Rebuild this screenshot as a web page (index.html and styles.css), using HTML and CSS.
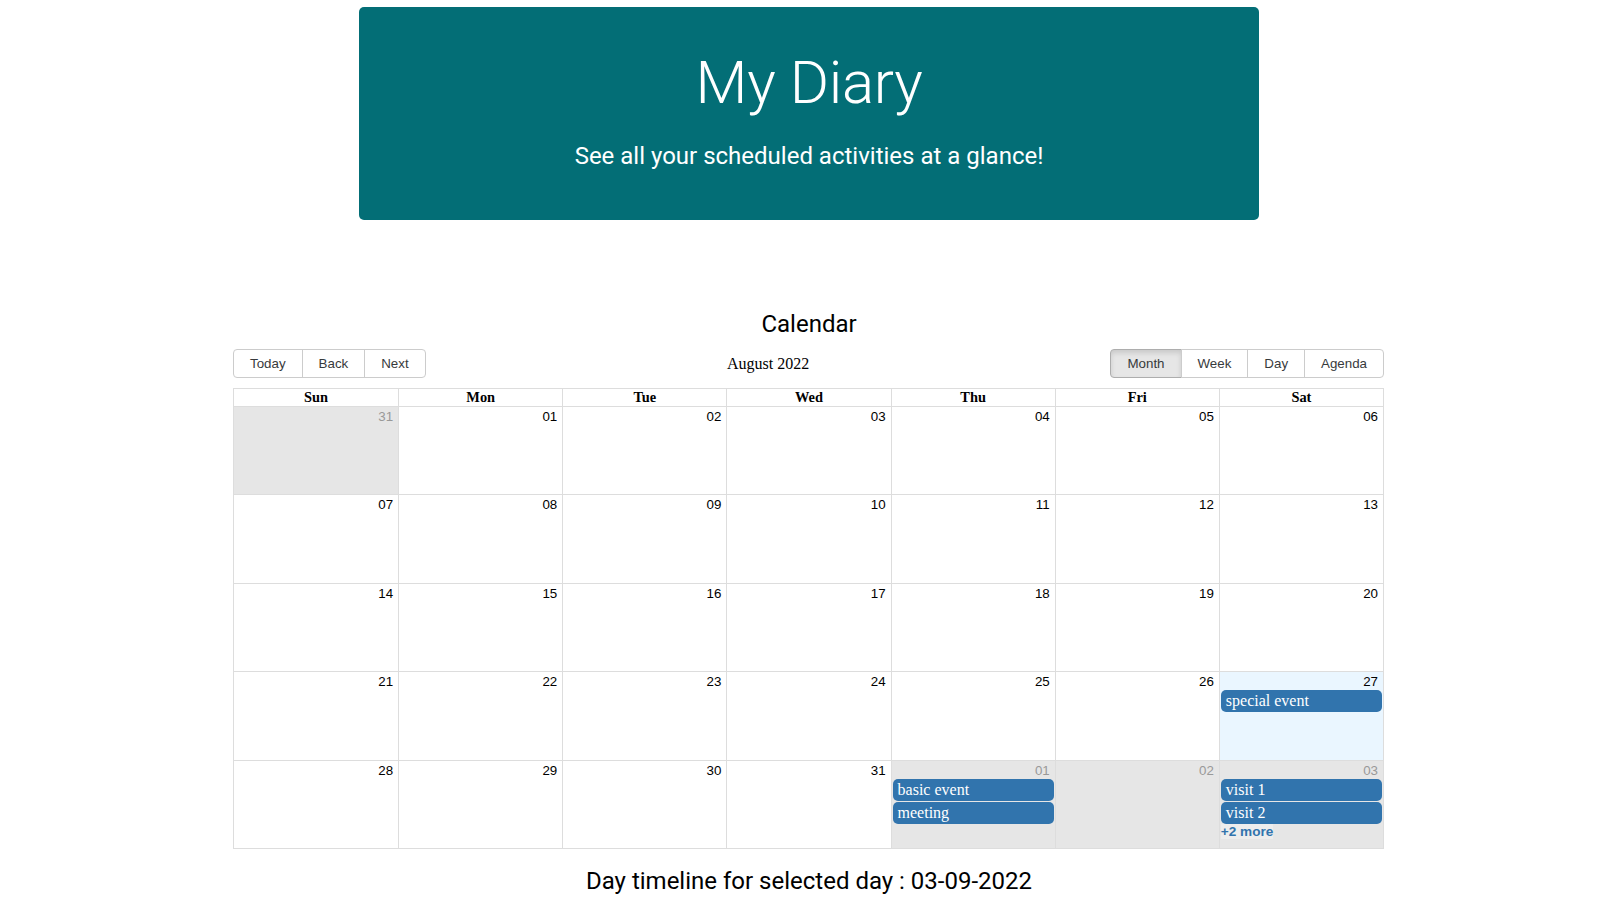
FILE: index.html
```html
<!DOCTYPE html>
<html>
<head>
<meta charset="utf-8">
<title>My Diary</title>
<link rel="stylesheet" href="styles.css">
</head>
<body>
<div class="hero">
  <h1 class="hero-title">My Diary</h1>
  <p class="hero-sub">See all your scheduled activities at a glance!</p>
</div>

<h2 class="section-title cal-title">Calendar</h2>

<div class="calendar">
  <div class="toolbar">
    <div class="btn-group">
      <button class="tb-btn">Today</button><button class="tb-btn">Back</button><button class="tb-btn">Next</button>
    </div>
    <span class="toolbar-label">August 2022</span>
    <div class="btn-group">
      <button class="tb-btn active">Month</button><button class="tb-btn">Week</button><button class="tb-btn">Day</button><button class="tb-btn">Agenda</button>
    </div>
  </div>

  <div class="month-view">
    <div class="month-header">
      <div class="day-name">Sun</div>
      <div class="day-name">Mon</div>
      <div class="day-name">Tue</div>
      <div class="day-name">Wed</div>
      <div class="day-name">Thu</div>
      <div class="day-name">Fri</div>
      <div class="day-name">Sat</div>
    </div>

    <div class="month-row">
      <div class="day off"><div class="date"><span>31</span></div></div>
      <div class="day"><div class="date"><span>01</span></div></div>
      <div class="day"><div class="date"><span>02</span></div></div>
      <div class="day"><div class="date"><span>03</span></div></div>
      <div class="day"><div class="date"><span>04</span></div></div>
      <div class="day"><div class="date"><span>05</span></div></div>
      <div class="day"><div class="date"><span>06</span></div></div>
    </div>
    <div class="month-row">
      <div class="day"><div class="date"><span>07</span></div></div>
      <div class="day"><div class="date"><span>08</span></div></div>
      <div class="day"><div class="date"><span>09</span></div></div>
      <div class="day"><div class="date"><span>10</span></div></div>
      <div class="day"><div class="date"><span>11</span></div></div>
      <div class="day"><div class="date"><span>12</span></div></div>
      <div class="day"><div class="date"><span>13</span></div></div>
    </div>
    <div class="month-row">
      <div class="day"><div class="date"><span>14</span></div></div>
      <div class="day"><div class="date"><span>15</span></div></div>
      <div class="day"><div class="date"><span>16</span></div></div>
      <div class="day"><div class="date"><span>17</span></div></div>
      <div class="day"><div class="date"><span>18</span></div></div>
      <div class="day"><div class="date"><span>19</span></div></div>
      <div class="day"><div class="date"><span>20</span></div></div>
    </div>
    <div class="month-row">
      <div class="day"><div class="date"><span>21</span></div></div>
      <div class="day"><div class="date"><span>22</span></div></div>
      <div class="day"><div class="date"><span>23</span></div></div>
      <div class="day"><div class="date"><span>24</span></div></div>
      <div class="day"><div class="date"><span>25</span></div></div>
      <div class="day"><div class="date"><span>26</span></div></div>
      <div class="day today"><div class="date"><span>27</span></div>
        <div class="events"><div class="event">special event</div></div>
      </div>
    </div>
    <div class="month-row">
      <div class="day"><div class="date"><span>28</span></div></div>
      <div class="day"><div class="date"><span>29</span></div></div>
      <div class="day"><div class="date"><span>30</span></div></div>
      <div class="day"><div class="date"><span>31</span></div></div>
      <div class="day off"><div class="date"><span>01</span></div>
        <div class="events"><div class="event">basic event</div><div class="event">meeting</div></div>
      </div>
      <div class="day off"><div class="date"><span>02</span></div></div>
      <div class="day off"><div class="date"><span>03</span></div>
        <div class="events"><div class="event">visit 1</div><div class="event">visit 2</div><div class="show-more"><span>+2 more</span></div></div>
      </div>
    </div>
  </div>
</div>

<h2 class="section-title timeline-title">Day timeline for selected day : 03-09-2022</h2>
</body>
</html>
```

FILE: styles.css
```css
html, body {
  margin: 0;
  background: #fff;
}

body {
  padding: 0 2px 0 0;
  font-family: Roboto, "Liberation Sans", Arial, sans-serif;
  color: #000;
}

.hero {
  box-sizing: border-box;
  width: 900px;
  height: 213px;
  margin: 7px auto 0;
  padding-top: 41px;
  background: #036e76;
  border-radius: 5px;
  color: #fff;
  text-align: center;
}

.hero-title {
  margin: 0;
  font-family: Roboto, sans-serif;
  font-size: 60px;
  font-weight: 300;
  line-height: 70px;
  letter-spacing: -0.3px;
}

.hero-sub {
  margin: 24px 0 0;
  font-family: Roboto, sans-serif;
  font-size: 24px;
  font-weight: 400;
  line-height: normal;
}

.section-title {
  margin: 0;
  font-family: Roboto, sans-serif;
  font-size: 24px;
  font-weight: 400;
  line-height: 28px;
  text-align: center;
  color: #000;
}

.cal-title {
  margin-top: 90px;
  margin-bottom: 11px;
}

.timeline-title {
  margin-top: 18px;
}

.calendar {
  width: 1151px;
  padding-right: 1px;
  margin: 0 auto;
}

.toolbar {
  display: flex;
  align-items: center;
  margin-bottom: 10px;
  font-family: "Liberation Serif", "Times New Roman", serif;
  font-size: 16px;
}

.toolbar-label {
  flex-grow: 1;
  padding: 0 10px;
  text-align: center;
}

.btn-group {
  display: inline-flex;
  white-space: nowrap;
}

.tb-btn {
  margin: 0;
  padding: 6px 16px;
  font-family: "Liberation Sans", Arial, sans-serif;
  font-size: 13.333px;
  line-height: 15px;
  color: #373a3c;
  background: none;
  border: 1px solid #ccc;
  border-radius: 0;
  cursor: pointer;
}

.tb-btn + .tb-btn {
  margin-left: -1px;
}

.tb-btn:first-child {
  border-top-left-radius: 4px;
  border-bottom-left-radius: 4px;
}

.tb-btn:last-child {
  border-top-right-radius: 4px;
  border-bottom-right-radius: 4px;
}

.tb-btn.active {
  background-color: #e6e6e6;
  border-color: #adadad;
  box-shadow: inset 0 3px 5px rgba(0, 0, 0, 0.125);
}

.month-view {
  box-sizing: border-box;
  height: 461px;
  border: 1px solid #ddd;
  display: flex;
  flex-direction: column;
  font-family: "Liberation Serif", "Times New Roman", serif;
  font-size: 16px;
}

.month-header {
  display: grid;
  grid-template-columns: repeat(7, 1fr);
}

.day-name {
  padding: 0 3px;
  text-align: center;
  font-weight: bold;
  font-size: 14.4px;
  line-height: normal;
  border-bottom: 1px solid #ddd;
  white-space: nowrap;
  overflow: hidden;
}

.day-name + .day-name {
  border-left: 1px solid #ddd;
}

.month-row {
  flex: 1 0 0;
  display: grid;
  grid-template-columns: repeat(7, 1fr);
  min-height: 0;
  overflow: hidden;
}

.month-row + .month-row {
  border-top: 1px solid #ddd;
}

.day {
  display: flex;
  flex-direction: column;
  min-width: 0;
}

.day + .day {
  border-left: 1px solid #ddd;
}

.day.off {
  background: #e6e6e6;
}

.day.today {
  background: #eaf6ff;
}

.date {
  padding-right: 5px;
  text-align: right;
  line-height: normal;
}

.date span {
  font-family: "Liberation Sans", Arial, sans-serif;
  font-size: 13.333px;
  color: #000;
}

.day.off .date span {
  color: #999;
}

.events {
  padding: 0 1px;
}

.event {
  box-sizing: border-box;
  padding: 2px 5px;
  background-color: #3174ad;
  border-radius: 5px;
  color: #fff;
  font-size: 16px;
  line-height: normal;
  white-space: nowrap;
  overflow: hidden;
  text-overflow: ellipsis;
}

.event + .event {
  margin-top: 1px;
}

.show-more {
  font-family: "Liberation Sans", Arial, sans-serif;
  font-size: 13.6px;
  line-height: normal;
}

.show-more span {
  font-weight: bold;
  color: #3174ad;
  background-color: rgba(255, 255, 255, 0.3);
}
```
